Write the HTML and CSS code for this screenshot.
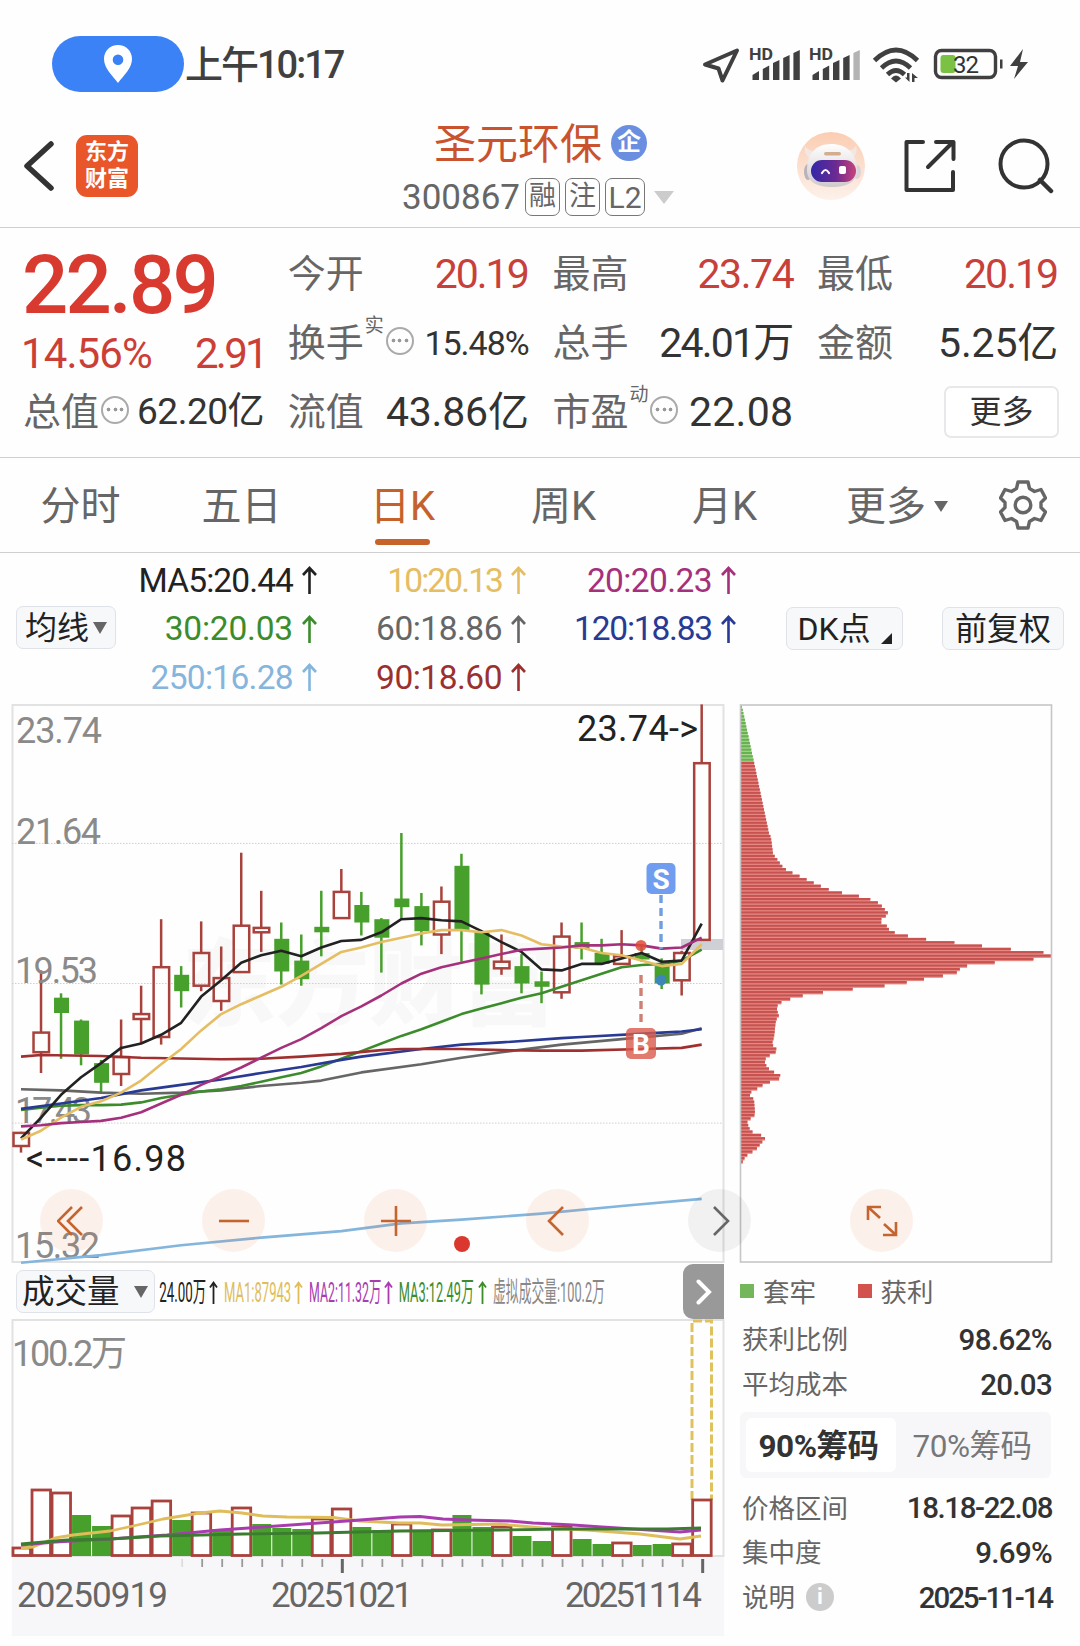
FILE: index.html
```html
<!DOCTYPE html>
<html lang="zh-CN">
<head>
    <meta charset="UTF-8">
    <meta name="viewport" content="width=device-width, initial-scale=1.0">
    <title>圣元环保 300867</title>
    <link rel="stylesheet" href="styles.css">
</head>
<body>
    <div class="status-bar">
        <div class="location-pill">
            <svg width="28" height="38" viewBox="0 0 28 38"><path fill="#fff" fill-rule="evenodd" d="M14 0C6 0 0 6 0 14c0 9 8 16 14 24 6-8 14-15 14-24C28 6 22 0 14 0zm0 9.500a5.300 5.300 0 1 1 0 10.600 5.300 5.300 0 0 1 0-10.600z"/></svg>
        </div>
        <span class="clock">上午10:17</span>
        <svg class="status-icons" width="340" height="44" viewBox="700 42 340 44">
            <path d="M705 64.500L737 50.500 722.500 80.500 718.500 68.500z" fill="none" stroke="#404040" stroke-width="4" stroke-linejoin="round"/>
            <g fill="#404040">
                <text class="hd" x="749" y="60" textLength="24" lengthAdjust="spacingAndGlyphs">HD</text>
                <path d="M752.500 80v-5l6.500-4v9zM762.800 80V69l6.400-3.500V80zM773 80V63l6.400-3V80zM783.200 80V58l6.400-3V80zM793.400 80V53l6.400-3V80z"/>
                <text class="hd" x="809" y="60" textLength="24" lengthAdjust="spacingAndGlyphs">HD</text>
                <path d="M812.500 80v-5l6.500-4v9zM822.800 80V69l6.400-3.500V80zM833 80V63l6.400-3V80zM843.200 80V58l6.400-3V80z"/>
                <path fill="#b3b3b3" d="M853.400 80V53l6.400-3V80z"/>
                <path d="M891 78.500q5-6 10 0l-5 4z"/>
                <path d="M1000 59.500h2.500v9h-2.500zM1023 49l-13 17h8l-4 13 14-17h-8z"/>
                <path d="M907 73h2.500v9l-4.500-4.500h2zM912 82V73l6 5h-3.500v4z"/>
            </g>
            <g fill="none" stroke="#404040" stroke-width="4.800">
                <path d="M874.500 60.500q21.500-21 43 0M881.500 68q14.500-14 29 0M887.500 74.500q8.500-8 17 0"/>
                <rect x="935.500" y="50.500" width="60" height="27" rx="6" stroke-width="3.400"/>
            </g>
            <rect x="940.500" y="55" width="15" height="18" rx="3" fill="#7bc143"/>
            <text x="953" y="72.500" font-size="24" fill="#333" textLength="26">32</text>
        </svg>
    </div>

    <div class="header">
        <svg class="back" width="32" height="50" viewBox="0 0 32 50"><path d="M28 3L4 25l24 22" fill="none" stroke="#333" stroke-width="5.500" stroke-linecap="round" stroke-linejoin="round"/></svg>
        <div class="logo">东方<br>财富</div>
        <div class="stock">
            <div class="stock-name"><span class="name-text">圣元环保</span><span class="corp">企</span></div>
            <div class="stock-code">
                <span class="code">300867</span>
                <span class="tag">融</span><span class="tag">注</span><span class="tag tag-wide">L2</span>
                <i class="caret caret-light"></i>
            </div>
        </div>
        <div class="header-actions">
            <svg class="robot" width="68" height="68" viewBox="0 0 68 68">
                <defs>
                    <linearGradient id="skin" x1="0" y1="0" x2="0" y2="1"><stop offset="0" stop-color="#fbcdb2"/><stop offset="1" stop-color="#fdf1ea"/></linearGradient>
                    <linearGradient id="visor" x1="0" y1="0" x2="1" y2="0"><stop offset="0" stop-color="#3328a8"/><stop offset="0.550" stop-color="#6b2a92"/><stop offset="1" stop-color="#c8427a"/></linearGradient>
                    <linearGradient id="helmet" x1="0" y1="0" x2="0" y2="1"><stop offset="0" stop-color="#fff"/><stop offset="1" stop-color="#cfc9cc"/></linearGradient>
                </defs>
                <circle cx="34" cy="34" r="34" fill="url(#skin)"/>
                <path d="M8 14q-2 10 8 14l5-9Q11 20 8 14zM59 13q3 10-6 15l-5-9q9 0 11-6z" fill="#f3e7e3"/>
                <ellipse cx="11" cy="40" rx="4" ry="8" fill="#b9b3bb"/><ellipse cx="60" cy="40" rx="4" ry="7" fill="#dcd3d8"/>
                <path d="M34 12c16 0 26 10 26 26 0 12-10 17-25 17S10 50 10 38c0-15 8-26 24-26z" fill="url(#helmet)"/>
                <rect x="14" y="28" width="45" height="22" rx="11" fill="url(#visor)"/>
                <path d="M25 41q3.500-6 7 0" fill="none" stroke="#fff" stroke-width="2.200" stroke-linecap="round"/>
                <rect x="42" y="34" width="7" height="8" rx="2" fill="#fff"/>
                <rect x="27" y="20" width="17" height="3.600" rx="1.800" fill="#d3ad8f"/>
            </svg>
            <svg class="share" width="54" height="54" viewBox="0 0 54 54"><path d="M20 3H3.500v48H50V33M33 3h17.500v17M50 3L25 28" fill="none" stroke="#333" stroke-width="4" stroke-linecap="round" stroke-linejoin="round"/></svg>
            <svg class="search" width="56" height="56" viewBox="0 0 56 56"><circle cx="26" cy="26" r="23.500" fill="none" stroke="#333" stroke-width="4"/><path d="M42 42l11 11" stroke="#333" stroke-width="4.500" stroke-linecap="round"/></svg>
        </div>
    </div>

    <div class="quote">
        <div class="quote-col">
            <div class="price">22.89</div>
            <div class="change"><span>14.56%</span><span class="diff">2.91</span></div>
            <div class="cell"><label>总值</label><i class="dots"></i><b class="mid">62.20亿</b></div>
        </div>
        <div class="quote-col">
            <div class="cell"><label>今开</label><b class="red">20.19</b></div>
            <div class="cell"><label>换手</label><sup>实</sup><i class="dots"></i><b class="small">15.48%</b></div>
            <div class="cell"><label>流值</label><b>43.86亿</b></div>
        </div>
        <div class="quote-col">
            <div class="cell"><label>最高</label><b class="red high">23.74</b></div>
            <div class="cell"><label>总手</label><b class="tight">24.01万</b></div>
            <div class="cell"><label>市盈</label><sup>动</sup><i class="dots"></i><b class="loose">22.08</b></div>
        </div>
        <div class="quote-col">
            <div class="cell"><label>最低</label><b class="red">20.19</b></div>
            <div class="cell"><label>金额</label><b>5.25亿</b></div>
            <div class="cell"><button class="more-btn">更多</button></div>
        </div>
    </div>

    <div class="tabs">
        <span class="tab">分时</span>
        <span class="tab">五日</span>
        <span class="tab active">日K</span>
        <span class="tab">周K</span>
        <span class="tab">月K</span>
        <span class="tab tab-more">更多<i class="caret caret-small"></i></span>
        <svg class="gear" width="48" height="50" viewBox="0 0 48 50">
            <path d="M19 2h10l1.500 6.500 5 3L42 9.500l4.500 8.500-4.500 4.500v5L46.500 32 42 40.500l-6.500-2-5 3L29 48H19l-1.500-6.500-5-3L6 40.500 1.500 32 6 27.500v-5L1.500 18 6 9.500l6.500 2 5-3z" fill="none" stroke="#666" stroke-width="3.400" stroke-linejoin="round"/>
            <circle cx="24" cy="25" r="7.800" fill="none" stroke="#666" stroke-width="3.400"/>
        </svg>
    </div>

    <div class="ma-bar">
        <button class="chip ma-select">均线<i class="caret caret-mid"></i></button>
        <div class="ma-grid">
            <span class="ma black">MA5:20.44<svg class="up"><use href="#up"/></svg></span>
            <span class="ma yellow">10:20.13<svg class="up"><use href="#up"/></svg></span>
            <span class="ma purple">20:20.23<svg class="up"><use href="#up"/></svg></span>
            <span class="ma green">30:20.03<svg class="up"><use href="#up"/></svg></span>
            <span class="ma gray">60:18.86<svg class="up"><use href="#up"/></svg></span>
            <span class="ma blue">120:18.83<svg class="up"><use href="#up"/></svg></span>
            <span class="ma sky">250:16.28<svg class="up"><use href="#up"/></svg></span>
            <span class="ma wine">90:18.60<svg class="up"><use href="#up"/></svg></span>
        </div>
        <button class="chip dk">DK点<i class="corner"></i></button>
        <button class="chip fq">前复权</button>
    </div>
    <svg width="0" height="0" class="defs">
        <symbol id="up" viewBox="0 0 15 28"><path d="M7.500 28V2M1 9l6.500-7L14 9" fill="none" stroke="currentColor" stroke-width="2.600"/></symbol>
    </svg>

    <div class="charts">
        <svg id="kline" class="kline" width="728" height="560" viewBox="0 4 728 560"></svg>
        <svg id="cost" class="cost" width="316" height="560" viewBox="738 4 316 560"></svg>
        <div class="tools">
            <span class="tool"><svg width="30" height="30" viewBox="0 0 30 30"><path d="M15 1L1 15l14 14M25 1L11 15l14 14"/></svg></span>
            <span class="tool"><svg width="30" height="30" viewBox="0 0 30 30"><path d="M0 15h30"/></svg></span>
            <span class="tool"><svg width="30" height="30" viewBox="0 0 30 30"><path d="M0 15h30M15 0v30"/></svg></span>
            <span class="tool"><svg width="30" height="30" viewBox="0 0 30 30"><path d="M20 1L6 15l14 14"/></svg></span>
            <span class="tool tool-gray"><svg width="30" height="30" viewBox="0 0 30 30"><path d="M9 1l14 14L9 29"/></svg></span>
            <span class="tool"><svg width="32" height="32" viewBox="0 0 32 32"><path d="M15 2H2v13M2 2l12 11M17 30h13V17M30 30L18 19"/></svg></span>
        </div>
    </div>

    <div class="bottom">
        <div class="volume">
            <div class="volume-head">
                <button class="chip volume-select">成交量<i class="caret caret-mid"></i></button>
                <svg class="volume-ma" width="456" height="54" viewBox="155 1264 456 54">
                    <g font-size="28" transform="translate(155 0) scale(0.460 1)">
                        <text x="9" y="1302" fill="#222" textLength="102" lengthAdjust="spacingAndGlyphs">24.00万</text>
                        <text x="150" y="1302" fill="#dfbd5b" textLength="146" lengthAdjust="spacingAndGlyphs">MA1:87943</text>
                        <text x="335" y="1302" fill="#a83caf" textLength="157" lengthAdjust="spacingAndGlyphs">MA2:11.32万</text>
                        <text x="530" y="1302" fill="#3c8c2c" textLength="163" lengthAdjust="spacingAndGlyphs">MA3:12.49万</text>
                        <text x="735" y="1302" fill="#888" textLength="243" lengthAdjust="spacingAndGlyphs">虚拟成交量:100.2万</text>
                    </g>
                    <g fill="none" stroke-width="1.800">
                        <path d="M213.500 1304v-21M210 1287.500l3.500-5 3.500 5" stroke="#222"/>
                        <path d="M298.500 1304v-21M295 1287.500l3.500-5 3.500 5" stroke="#dfbd5b"/>
                        <path d="M388.500 1304v-21M385 1287.500l3.500-5 3.500 5" stroke="#a83caf"/>
                        <path d="M482.500 1304v-21M479 1287.500l3.500-5 3.500 5" stroke="#3c8c2c"/>
                    </g>
                </svg>
                <span class="next"><svg width="16" height="26" viewBox="0 0 16 26"><path d="M2.500 2.500L13 13 2.500 23.500" fill="none" stroke="#fff" stroke-width="4" stroke-linecap="round"/></svg></span>
            </div>
            <svg id="volume" class="volume-chart" width="728" height="238" viewBox="0 59 728 238"></svg>
            <svg id="axis" class="axis" width="712" height="79" viewBox="12 297 712 79"></svg>
        </div>

        <div class="cost-info">
            <div class="legend">
                <span><i class="square square-green"></i>套牢</span>
                <span><i class="square square-red"></i>获利</span>
            </div>
            <div class="info-row"><span>获利比例</span><b class="rate">98.62%</b></div>
            <div class="info-row"><span>平均成本</span><b>20.03</b></div>
            <div class="switch">
                <span class="switch-on">90%筹码</span>
                <span class="switch-off">70%筹码</span>
            </div>
            <div class="info-row"><span>价格区间</span><b class="range">18.18-22.08</b></div>
            <div class="info-row"><span>集中度</span><b>9.69%</b></div>
            <div class="info-row"><span>说明<i class="info">i</i></span><b class="day">2025-11-14</b></div>
        </div>
    </div>

    <script src="chart.js"></script>
</body>
</html>
```
FILE: styles.css
```css
* {
    box-sizing: border-box;
}
body {
    margin: 0;
    width: 1080px;
    height: 1646px;
    overflow: hidden;
    background: #fefefe;
    color: #333;
    font-family: Roboto, "Noto Sans CJK SC", sans-serif;
}
svg {
    display: block;
    flex: none;
}
svg text {
    font-family: Roboto, "Noto Sans CJK SC", sans-serif;
}
button {
    font-family: inherit;
    padding: 0;
}
i {
    font-style: normal;
    flex: none;
}
.defs {
    display: none;
}

/* 状态栏 */
.status-bar {
    display: flex;
    align-items: center;
    height: 128px;
    padding-left: 52px;
}
.location-pill {
    display: flex;
    align-items: center;
    justify-content: center;
    width: 132px;
    height: 56px;
    border-radius: 28px;
    background: #3b82f6;
}
.clock {
    width: 516px;
    padding: 2px 0 0 1px;
    font-size: 38px;
    font-weight: 500;
    line-height: 50px;
    letter-spacing: -2px;
    white-space: nowrap;
    color: #404040;
}
.hd {
    font-size: 17px;
    font-weight: 700;
}

/* 标题栏 */
.header {
    display: flex;
    height: 100px;
    border-bottom: 1px solid #cfcfcf;
}
.back {
    margin: 13px 0 0 23px;
}
.logo {
    width: 62px;
    height: 62px;
    margin: 7px 0 0 21px;
    padding-top: 3px;
    border-radius: 11px;
    background: #e8562a;
    color: #fff;
    font-size: 22px;
    font-weight: 700;
    line-height: 27px;
    text-align: center;
}
.stock {
    width: 527px;
    margin-left: 132px;
}
.stock-name {
    display: flex;
    height: 34px;
    padding-left: 164px;
    color: #c9532f;
    font-size: 42px;
    line-height: 34px;
    white-space: nowrap;
}
.corp {
    width: 36px;
    height: 36px;
    margin: -3px 0 0 9px;
    border-radius: 50%;
    background: #6a8fe0;
    color: #fff;
    font-size: 24px;
    font-weight: 700;
    line-height: 34px;
    text-align: center;
}
.stock-code {
    display: flex;
    align-items: center;
    height: 38px;
    margin-top: 16px;
    padding-left: 132px;
    color: #666;
    font-size: 35px;
}
.code {
    width: 123px;
}
.tag {
    width: 35px;
    height: 38px;
    margin-right: 5px;
    border: 1.500px solid #777;
    border-radius: 7px;
    font-size: 27px;
    line-height: 35px;
    text-align: center;
}
.tag-wide {
    width: 40px;
    font-size: 30px;
    line-height: 37px;
}
.header-actions {
    display: flex;
    flex: none;
}
.robot {
    margin-top: 4px;
}
.share {
    margin: 11px 0 0 38px;
}
.search {
    margin: 10px 0 0 41px;
}

/* 三角 */
.caret {
    display: inline-block;
    border-left: 10px solid transparent;
    border-right: 10px solid transparent;
    border-top: 13px solid #666;
}
.caret-light {
    margin-left: 4px;
    border-top-color: #ccc;
}
.caret-small {
    border-width: 11px 7px 0;
    margin: -2px 0 0 8px;
}
.caret-mid {
    border-width: 12px 7px 0;
}

/* 行情 */
.quote {
    display: grid;
    grid-template-columns: repeat(4, 240px);
    column-gap: 24.700px;
    height: 230px;
    padding: 11px 0 0 23px;
    border-bottom: 1px solid #cfcfcf;
}
.price {
    height: 91px;
    margin-left: -1px;
    color: #d93a30;
    font-size: 81.500px;
    font-weight: 500;
    line-height: 92px;
    letter-spacing: -2.800px;
}
.change {
    display: flex;
    justify-content: space-between;
    height: 47px;
    margin-left: -2px;
    color: #cc3f36;
    font-size: 42px;
    line-height: 48px;
    letter-spacing: -0.900px;
}
.diff {
    margin-right: -3px;
    letter-spacing: -2.700px;
}
.cell {
    display: flex;
    align-items: center;
    height: 69px;
    white-space: nowrap;
}
.cell label {
    color: #666;
    font-size: 38px;
    line-height: 50px;
}
.cell sup {
    align-self: flex-start;
    margin: 6px 0 0 1px;
    color: #666;
    font-size: 19px;
    line-height: 24px;
}
.cell b {
    margin: 1px -1px 0 auto;
    font-size: 41px;
    font-weight: 400;
    line-height: 50px;
    letter-spacing: -0.200px;
}
.cell .red {
    margin-right: 0;
    color: #c8403a;
    letter-spacing: -2px;
}
.cell .high {
    margin-right: -1px;
    letter-spacing: -1.400px;
}
.cell .tight {
    margin-right: 0;
    letter-spacing: -1.800px;
}
.cell .loose {
    letter-spacing: 0.300px;
}
.cell .mid {
    font-size: 37px;
    letter-spacing: -0.500px;
}
.cell .small {
    font-size: 34px;
    letter-spacing: -1px;
}
.dots {
    display: block;
    width: 28px;
    height: 28px;
    margin: 0 0 4px 2px;
    border: 2px solid #aaa;
    border-radius: 50%;
    background: radial-gradient(circle, #999 1.600px, transparent 2.200px) center / 7px 7px no-repeat,
        radial-gradient(circle, #999 1.600px, transparent 2.200px) 2px center / 7px 7px no-repeat,
        radial-gradient(circle, #999 1.600px, transparent 2.200px) 15px center / 7px 7px no-repeat;
}
.more-btn {
    width: 115px;
    height: 52px;
    margin: 0 -2px 0 auto;
    border: 2px solid #e8e8ea;
    border-radius: 7px;
    background: #fff;
    color: #333;
    font-size: 32px;
    line-height: 44px;
}

/* 周期 */
.tabs {
    display: flex;
    height: 95px;
    border-bottom: 1px solid #cfcfcf;
}
.tab {
    display: flex;
    flex-direction: column;
    align-items: center;
    width: 161px;
    height: 94px;
    padding-top: 19px;
    color: #666;
    font-size: 40px;
    line-height: 60px;
}
.tab-more {
    flex-direction: row;
    justify-content: center;
    width: 184px;
    padding: 4px 0 0;
}
.active {
    color: #c5622b;
}
.active::after {
    content: "";
    width: 55px;
    height: 6px;
    margin-top: 2px;
    border-radius: 3px;
    background: #c8622b;
}
.gear {
    margin: 22px 0 0 10px;
}

/* 均线 */
.ma-bar {
    display: flex;
    height: 151px;
    padding: 3px 0 0 16px;
}
.chip {
    display: flex;
    align-items: center;
    justify-content: center;
    flex: none;
    height: 43px;
    border: 1.500px solid #dfe2e8;
    border-radius: 7px;
    background: #f7f8fa;
    color: #222;
    font-size: 32px;
    line-height: 38px;
}
.ma-select {
    width: 100px;
    margin-top: 50px;
}
.ma-select .caret {
    margin-left: 4px;
}
.ma-grid {
    display: grid;
    grid-template-columns: 201px 209px 210px;
    grid-auto-rows: 48.500px;
    width: 620px;
}
.ma {
    display: flex;
    align-items: center;
    justify-content: flex-end;
    font-size: 33.500px;
    white-space: nowrap;
}
.up {
    width: 15px;
    height: 28px;
    margin-left: 9px;
}
.black { color: #222; letter-spacing: -0.900px; }
.yellow { color: #e5bd62; letter-spacing: -1.900px; }
.purple { color: #a5307c; letter-spacing: -0.600px; }
.green { color: #3c8c2c; letter-spacing: -0.200px; }
.gray { color: #666; letter-spacing: -0.500px; }
.blue { color: #283a94; letter-spacing: -1.200px; }
.sky { color: #85b5dd; letter-spacing: -0.700px; }
.wine { color: #9b3030; letter-spacing: -0.500px; }
.dk {
    width: 117px;
    margin: 51px 0 0 50px;
}
.corner {
    align-self: flex-end;
    margin: 0 0 5px 10px;
    border-left: 11px solid transparent;
    border-bottom: 11px solid #222;
}
.fq {
    width: 122px;
    margin: 51px 0 0 39px;
}

/* 图表 */
.charts {
    position: relative;
    display: flex;
    gap: 10px;
    height: 558px;
}
.tools {
    position: absolute;
    left: 40px;
    top: 485px;
    display: flex;
    gap: 99px;
}
.tool {
    display: flex;
    align-items: center;
    justify-content: center;
    width: 63px;
    height: 63px;
    border-radius: 50%;
    background: rgba(232, 120, 60, 0.1);
}
.tool path {
    fill: none;
    stroke: #c4642f;
    stroke-width: 2.600;
}
.tool-gray {
    background: rgba(0, 0, 0, 0.05);
}
.tool-gray path {
    stroke: #666;
}
.axis-label {
    font-size: 36px;
    fill: #8a8a8a;
}
.mark {
    font-size: 36px;
    fill: #222;
}
.watermark {
    font-size: 94px;
    font-weight: 900;
    fill: #f8f8f8;
}
.badge {
    font-size: 28px;
    font-weight: 700;
    fill: #fff;
    text-anchor: middle;
}
.date {
    font-size: 35px;
    fill: #666;
}

/* 成交量与筹码 */
.bottom {
    display: flex;
}
.volume {
    width: 740px;
}
.volume-head {
    display: flex;
    height: 57px;
    padding: 2px 0 0 16px;
}
.volume-select {
    width: 139px;
    margin-top: 6px;
    justify-content: flex-start;
    padding-left: 5px;
    font-size: 32.500px;
}
.volume-select .caret {
    margin-left: 14px;
}
.next {
    display: flex;
    align-items: center;
    justify-content: center;
    width: 41px;
    height: 55px;
    margin-left: 72px;
    border-radius: 10px 0 0 10px;
    background: #999;
}
.axis {
    margin-left: 12px;
    background: #f7f7fa;
}
.cost-info {
    width: 312px;
    padding-top: 3px;
}
.legend {
    display: flex;
    height: 52px;
    color: #666;
    font-size: 26.500px;
}
.legend span {
    display: flex;
    align-items: center;
    width: 117.500px;
    padding-bottom: 2px;
}
.square {
    width: 14px;
    height: 14px;
    margin: 2px 9px 0 0;
}
.square-green {
    background: #74b65a;
}
.square-red {
    background: #d2524e;
}
.info-row {
    display: flex;
    align-items: center;
    justify-content: space-between;
    height: 44.700px;
    padding-left: 2px;
    color: #666;
    font-size: 26.500px;
}
.info-row span {
    display: flex;
    align-items: center;
    padding-bottom: 3px;
}
.info-row b {
    margin-top: 1px;
    color: #333;
    font-size: 29.500px;
    font-weight: 500;
    letter-spacing: -0.700px;
}
.info-row .rate {
    letter-spacing: -0.600px;
}
.info-row .range {
    letter-spacing: -1.400px;
}
.info-row .day {
    letter-spacing: -2.100px;
}
.info {
    width: 28px;
    height: 28px;
    margin: 2px 0 0 11px;
    border-radius: 50%;
    background: #ccc;
    color: #fff;
    font-size: 22px;
    font-weight: 700;
    line-height: 28px;
    text-align: center;
}
.switch {
    display: flex;
    width: 311px;
    height: 66px;
    margin: 6px 0 7px;
    padding: 6px;
    border-radius: 6px;
    background: #f7f7fa;
    font-size: 31.500px;
    line-height: 57px;
    text-align: center;
    letter-spacing: -0.500px;
}
.switch-on {
    width: 150px;
    padding-right: 5px;
    border-radius: 6px;
    background: #fff;
    color: #333;
    font-weight: 700;
}
.switch-off {
    flex: 1;
    padding-left: 3px;
    color: #777;
}
```
FILE: chart.js
```js
var RED = '#a8423c';
var GREEN = '#47a02b';

// x position of the i-th trading day
function dayX(i) {
    return 21 + i * 20.02;
}

// level in the price data -> y position
function py(v) {
    return +(v * 1.0905).toFixed(1);
}

function line(x1, y1, x2, y2, color, width, extra) {
    return '<line x1="' + x1 + '" y1="' + y1 + '" x2="' + x2 + '" y2="' + y2 + '" stroke="' + color + '" stroke-width="' + width + '" ' + (extra || '') + '/>';
}

function rect(x, y, w, h, fill, extra) {
    return '<rect x="' + x + '" y="' + y + '" width="' + w + '" height="' + h + '" fill="' + fill + '" ' + (extra || '') + '/>';
}

function text(x, y, cls, str, len) {
    return '<text x="' + x + '" y="' + y + '" class="' + cls + '"' + (len ? ' textLength="' + len + '"' : '') + '>' + str + '</text>';
}

function polyline(points, color, width) {
    return '<polyline fill="none" stroke="' + color + '" stroke-width="' + (width || 2.6) + '" stroke-linejoin="round" points="' + points.join(' ') + '"/>';
}

function daily(values) {
    return values.map(function (v, i) { return dayX(i) + ',' + py(v); });
}

function sparse(pairs) {
    return pairs.map(function (p) { return dayX(p[0]) + ',' + py(p[1]); });
}

// high, body top, body bottom, low, 1 = up
var candles = [
    [396, 397, 409, 415, 1], [248, 305, 323, 342, 1], [269, 273, 287, 329, 0], [293, 294, 325, 335, 0],
    [330, 333, 351, 361, 0], [293, 327.5, 343, 354, 1], [262, 288, 292.5, 315, 1], [201, 245, 309, 316, 1],
    [244, 252, 267, 282, 0], [203, 232, 262, 267, 1], [226, 255, 276, 285, 1], [140, 207, 249.5, 249.5, 1],
    [175, 209, 213, 231, 1], [204, 219, 249, 261, 0], [215, 239, 256, 262, 0], [175, 208, 213, 235, 0],
    [155, 176, 200, 200, 1], [176, 188, 204, 216, 0], [200, 201, 218, 250, 0], [122, 182, 190, 200, 0],
    [177, 189, 212, 225, 0], [171, 185, 215, 233, 1], [141, 152, 211, 240, 0], [212, 212, 261, 270, 0],
    [215, 240, 246, 252, 1], [233, 244, 260, 269, 0], [249, 258, 263, 278, 0], [204, 217, 268, 274, 1],
    [204, 222, 228, 238, 0], [219, 232, 242, 242, 0], [211, 235, 242, 242, 1], [224, 232, 238, 240, 0],
    [237, 244, 260, 265, 0], [230, 232, 257, 271, 1], [4, 58, 220, 220, 1]
];

function drawKline() {
    var s = '';
    s += text(182, 318, 'watermark', '东方财富', 374);
    s += rect(12.5, 5, 711, 557, 'none', 'stroke="#e2e2e2" stroke-width="2"');
    [131.5, 260, 388].forEach(function (v) {
        s += line(12, py(v), 723, py(v), '#cfcfcf', 1, 'stroke-dasharray="1.500 1.500"');
    });
    s += rect(681, 239, 42, 11, '#cfcfd6');

    candles.forEach(function (c, i) {
        var x = dayX(i);
        var top = py(c[1]);
        var bottom = py(c[2]);
        if (c[4]) {
            s += line(x, py(c[0]), x, top, RED, 2.5);
            s += line(x, bottom, x, py(c[3]), RED, 2.5);
            s += rect(x - 7.5, top, 15.5, bottom - top, 'none', 'stroke="' + RED + '" stroke-width="2.500"');
        } else {
            s += line(x, py(c[0]), x, py(c[3]), GREEN, 2.5);
            s += rect(x - 7, top, 15, bottom - top, GREEN);
        }
    });

    s += text(16, 43, 'axis-label', '23.74', 86);
    s += text(16, 144, 'axis-label', '21.64', 85);
    s += text(15, 283, 'axis-label', '19.53', 83);
    s += text(15, 423, 'axis-label', '17.43', 77);
    s += text(15, 558, 'axis-label', '15.32', 85);

    s += polyline(sparse([[0, 516], [4, 509], [8, 500], [12, 493], [16, 487], [19, 480], [22, 476.5], [26, 471], [30, 464], [34, 457.5]]), '#83b5dd');
    s += polyline(sparse([[0, 357], [2, 358], [4, 360], [6, 361], [8, 360], [10, 358], [12, 354], [14, 351], [15, 349], [17, 341.5], [20, 334], [22, 328], [24, 323], [27, 316], [30, 311], [33, 306], [34, 301]]), '#666');
    s += polyline(daily([376, 374, 372, 371.5, 371.5, 371, 369, 365, 362, 359, 357, 354, 350, 346, 342, 336, 329, 322, 315, 308, 302, 295, 288, 283, 278, 273, 269, 263, 257, 251, 245, 243, 242, 239, 229]), '#3c8c2c');
    s += polyline(sparse([[0, 375], [2, 370], [4, 365], [6, 358], [8, 353], [10, 348], [12, 342], [14, 336.5], [16, 330], [17, 327], [20, 320], [22, 316], [24, 314], [27, 310], [28, 309], [32, 305], [33, 304], [34, 302]]), '#283a94');
    s += polyline(sparse([[0, 327], [1, 325.5], [4, 326.5], [6, 328], [10, 329.5], [12, 329], [14, 327], [16, 324.5], [18, 321], [19, 320], [22, 320], [24, 321], [26, 321.5], [28, 321.5], [31, 320], [33, 319], [34, 316]]), '#a03030');
    s += polyline(daily([402, 383, 362, 346, 333, 319, 315, 307, 296, 272, 257, 241, 234, 230, 235, 227, 221, 220, 213, 201, 200, 202, 203, 212, 222, 231, 247, 248, 242, 242, 237, 232, 240, 239, 205]), '#222');
    s += polyline(daily([403, 395, 383, 373, 368, 360, 349, 334, 320, 303, 288, 279, 271, 263, 253, 242, 231, 227, 222, 218, 214, 211, 211, 213, 211, 216, 224, 226, 227, 232, 234, 239, 244, 242, 224]), '#e5bd62');
    s += polyline(daily([391, 390, 388, 387, 386, 383, 378, 370, 362, 353, 345, 337, 328, 319, 311, 301, 290, 281, 271, 260, 251, 245, 241, 237, 233, 229, 228, 227, 225, 225, 224, 225, 228, 227, 218]), '#a5307c');

    // buy / sell points
    s += line(661, 195, 661, 249, '#6f9fe0', 3.4, 'stroke-dasharray="8 5"');
    s += line(641, 275, 641, 327, '#cf8074', 3.4, 'stroke-dasharray="8 5"');
    s += rect(646.5, 163, 29, 31, '#709df0', 'rx="5"') + text(661, 189, 'badge', 'S');
    s += rect(626, 328, 30, 31, '#da5a4c', 'rx="5" opacity="0.800"') + text(641, 353.5, 'badge', 'B');
    s += '<circle cx="641" cy="245.500" r="5.500" fill="#df4a35" opacity="0.850"/>';
    s += '<circle cx="661" cy="280" r="5.500" fill="#3f86b8"/>';
    s += '<circle cx="462" cy="544" r="8" fill="#da382e"/>';

    s += text(577, 41, 'mark', '23.74-&gt;', 121);
    s += text(26, 471, 'mark', '&lt;----16.98', 160);
    document.getElementById('kline').innerHTML = s;
}

// chip distribution outline: level, bar width
var outline = [
    [6, 1], [57, 13], [122, 28], [126, 30], [141, 32], [147, 37], [153, 42], [156, 46], [159, 53], [162, 60],
    [165, 67], [168, 74], [171, 81], [174, 89], [177, 103], [180, 120], [184, 134], [187, 139], [190, 142],
    [193, 145], [196, 148], [199, 143], [202, 139], [205, 141], [208, 148], [211, 148], [214, 156], [217, 171],
    [220, 190], [223, 221], [226, 247], [229, 276], [232, 309], [235.5, 311], [238.5, 283], [241.5, 240],
    [244.5, 220], [248, 218], [251, 214], [254, 193], [257, 176], [260, 159], [263, 134], [266, 99], [269, 73],
    [272, 56], [275, 46], [278, 38], [281, 36], [284, 36], [287, 37], [290, 38], [293, 35], [309, 33], [315, 31],
    [318, 33], [321, 37], [324, 33], [327, 26], [330, 24], [333, 24], [336, 26], [339, 29], [342, 35], [345, 41],
    [348, 37], [351, 26], [354, 20], [357, 15], [360, 9], [363, 9], [366, 13], [379, 14], [382, 13], [385, 7],
    [388, 6], [391, 8], [394, 9], [397, 13], [400, 24], [403, 24], [406, 20], [409, 18], [412, 15], [415, 10],
    [418, 5], [421, 3], [425, 1]
];

function widthAt(y) {
    for (var i = 1; i < outline.length; i++) {
        var a = outline[i - 1], b = outline[i];
        if (y <= b[0]) {
            return a[1] + (b[1] - a[1]) * (y - a[0]) / (b[0] - a[0]);
        }
    }
    return 1;
}

function drawCost() {
    var s = '';
    for (var v = 6; v < 425; v += 3.046) {
        var trapped = v < 57;
        var w = widthAt(v).toFixed(1);
        s += rect(741, py(v) - 1.2, w, 3.4, trapped ? '#a5d890' : '#e88782');
        s += rect(741, py(v) - 1.2, w, 2.2, trapped ? '#68b050' : '#c65350');
    }
    s += rect(740.5, 5, 311, 557, 'none', 'stroke="#c6c6c6" stroke-width="1.600"');
    document.getElementById('cost').innerHTML = s;
}

// bar top, 1 = up
var volumes = [
    [288, 1], [230, 1], [233, 1], [255, 0], [266, 0], [256, 1], [248, 1], [241, 1], [260, 0], [253, 1], [269, 0],
    [248, 1], [264, 0], [268, 0], [269, 0], [259, 1], [249, 1], [267, 0], [270, 0], [264, 1], [270, 0], [270, 1],
    [255, 0], [267, 0], [267, 1], [276, 0], [281, 0], [267, 1], [279, 0], [284, 0], [283, 1], [285, 0], [284, 0],
    [284, 1], [240, 1]
];

function drawVolume() {
    var s = rect(12.5, 60, 711, 236, 'none', 'stroke="#e2e2e2" stroke-width="2"');
    s += text(12, 106, 'axis-label', '100.2万', 115);
    s += '<path d="M692 240V61h19.500v179" fill="none" stroke="#dfc25e" stroke-width="3" stroke-dasharray="9 3"/>';
    volumes.forEach(function (v, i) {
        var x = dayX(i);
        if (v[1]) {
            var left = Math.max(x - 9, 13);
            s += rect(left, v[0], x + 9.5 - left, 295.5 - v[0], '#fff', 'stroke="' + RED + '" stroke-width="2.800"');
        } else {
            s += rect(x - 9, v[0], 19, 296 - v[0], GREEN);
        }
    });
    s += polyline(['21,288', '33,287', '55,278', '73,275', '110,271', '133,266', '163,259', '200,253', '220,251', '242,253', '263,256', '287,257', '333,257.5', '360,261', '400,263', '420,263', '442,265', '500,264', '520,266', '543,268', '587,270', '640,274', '680,279', '701,276'], '#dfbd5b', 2.8);
    s += polyline(['21,285', '55,282', '110,279', '167,275', '220,270', '277,266', '333,262', '360,260', '400,257', '420,256.500', '443,259', '467,260', '510,261', '533,263', '573,265', '633,269', '680,272', '701,270'], '#a83caf', 2.8);
    s += polyline(['21,284', '67,280', '110,279', '160,276', '243,274', '317,273', '400,271', '500,270', '567,269', '667,269', '701,268'], '#3c7c30', 2.8);
    document.getElementById('volume').innerHTML = s;
}

function drawAxis() {
    var s = '';
    for (var i = 8; i < 35; i++) {
        var big = i === 16 || i === 34;
        s += line(dayX(i) + 1, 299, dayX(i) + 1, big ? 313 : 307, big ? '#666' : (i === 8 ? '#ddd' : '#999'), big ? 3 : 1.8);
    }
    s += text(17, 347, 'date', '20250919', 151);
    s += text(271, 347, 'date', '20251021', 142);
    s += text(565, 347, 'date', '20251114', 137);
    document.getElementById('axis').innerHTML = s;
}

drawKline();
drawCost();
drawVolume();
drawAxis();
```
